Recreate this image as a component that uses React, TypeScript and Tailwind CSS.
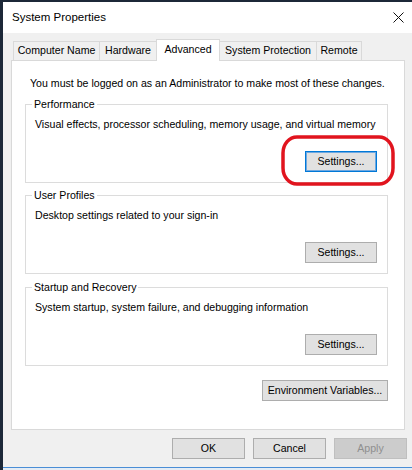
import React from 'react';

const tabs = [
  { label: 'Computer Name', width: 'w-[86px]' },
  { label: 'Hardware', width: 'w-[57px]' },
  { label: 'Advanced', width: 'w-[64px]', active: true },
  { label: 'System Protection', width: 'w-[96px]' },
  { label: 'Remote', width: 'w-[46px]' },
];

const groups = [
  { title: 'Performance', desc: 'Visual effects, processor scheduling, memory usage, and virtual memory', focused: true, gap: 'mt-[7px]' },
  { title: 'User Profiles', desc: 'Desktop settings related to your sign-in', gap: 'mt-[5px]' },
  { title: 'Startup and Recovery', desc: 'System startup, system failure, and debugging information', gap: 'mt-[6px]' },
];

const Button: React.FC<{ label: string; width: string; focused?: boolean; disabled?: boolean }> = ({
  label,
  width,
  focused,
  disabled,
}) => (
  <button
    className={`${width} h-[21px] flex items-center justify-center border leading-none ${
      disabled
        ? 'bg-[#cccccc] border-[#bfbfbf] text-[#8f8f8f]'
        : focused
        ? 'bg-[#e1e1e1] border-[#0078d7] shadow-[inset_0_0_0_1px_#6fa8e0]'
        : 'bg-[#e1e1e1] border-[#adadad]'
    }`}
  >
    {label}
  </button>
);

const GroupBox: React.FC<{ title: string; desc: string; focused?: boolean; gap: string }> = ({
  title,
  desc,
  focused,
  gap,
}) => (
  <fieldset className={`${gap} border border-[#dcdcdc] pb-[10px]`}>
    <legend className="ml-[6px] px-[2px] leading-[14px]">{title}</legend>
    <p className="mt-[6px] pl-[9px] leading-[14px]">{desc}</p>
    <div className="mt-[20px] flex justify-end pr-[10px]">
      <Button label="Settings..." width="w-[72px]" focused={focused} />
    </div>
  </fieldset>
);

export default function App() {
  return (
    <div className="relative flex w-[412px] h-[470px] overflow-hidden bg-[#1c2838] font-['Liberation_Sans',Arial,sans-serif] text-[10.6px] text-black">
      <div className="w-[3px]" />
      <div className="flex-1 flex flex-col mt-[2px] h-[468px]">
        {/* title bar */}
        <div className="h-[31px] bg-white flex items-center justify-between pl-[9px] pr-[8px]">
          <span className="text-[11.5px]">System Properties</span>
          <svg width="11" height="11" viewBox="0 0 11 11" className="mb-[1px]">
            <path d="M0.5 0.5 L10.5 10.5 M10.5 0.5 L0.5 10.5" stroke="#111" strokeWidth="1" />
          </svg>
        </div>

        {/* body */}
        <div className="flex-1 bg-[#f0f0f0] border-b border-[#4a8ed6] pl-[8px] pr-[5px] pt-[6px] flex flex-col">
          <div className="flex items-end ml-[2px] relative z-10">
            {tabs.map((tab, i) => {
              const afterActive = i > 0 && tabs[i - 1].active;
              const last = i === tabs.length - 1;
              return (
                <div
                  key={tab.label}
                  className={`${tab.width} flex items-center justify-center border-t border-[#d9d9d9] ${
                    tab.active
                      ? 'h-[22px] -mb-px bg-white border-l border-r pb-[2px]'
                      : `h-[19px] ${afterActive ? '' : 'border-l'} ${last ? 'border-r' : ''}`
                  }`}
                >
                  {tab.label}
                </div>
              );
            })}
          </div>

          <div className="h-[370px] mr-[2px] border border-[#d9d9d9] bg-white flex flex-col pl-[13px] pr-[16px] pt-[15px]">
            <p className="pl-[5px] leading-[14px]">
              You must be logged on as an Administrator to make most of these changes.
            </p>
            {groups.map((g) => (
              <GroupBox key={g.title} {...g} />
            ))}
            <div className="mt-[14px] flex justify-end">
              <Button label="Environment Variables..." width="w-[126px]" />
            </div>
          </div>

          <div className="mt-[8px] flex justify-end gap-[8px]">
            <Button label="OK" width="w-[73px]" />
            <Button label="Cancel" width="w-[73px]" />
            <Button label="Apply" width="w-[73px]" disabled />
          </div>
        </div>
        <div className="h-[2px] bg-[#e4ecf5]" />
      </div>

      {/* red annotation circling the Performance settings button */}
      <svg
        className="absolute left-[281px] top-[135px] pointer-events-none"
        width="114"
        height="51"
        viewBox="0 0 114 51"
      >
        <rect x="2" y="2" width="110" height="47" rx="14" ry="16" fill="none" stroke="#e1141e" strokeWidth="3.5" />
      </svg>
    </div>
  );
}
